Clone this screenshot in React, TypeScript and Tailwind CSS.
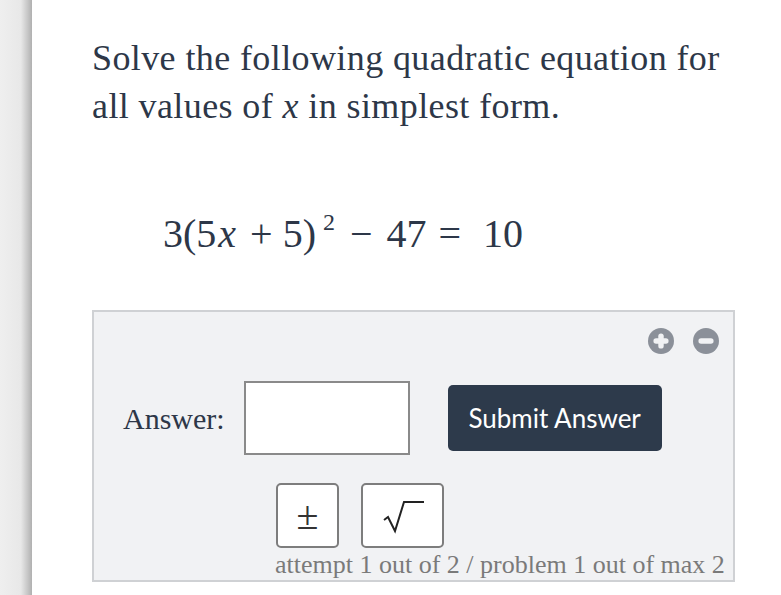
import React from "react";

const serif = { fontFamily: '"Liberation Serif", "DejaVu Serif", serif' };

const CircleIcon = ({ plus }: { plus?: boolean }) => (
  <svg width="26" height="26" viewBox="0 0 24 24">
    <circle cx="12" cy="12" r="12" fill="#8b9099" />
    <rect x="5" y="9.5" width="14" height="5" rx="2.5" fill="#f1f2f4" />
    {plus && <rect x="9.5" y="5" width="5" height="14" rx="2.5" fill="#f1f2f4" />}
  </svg>
);

const App = () => {
  return (
    <div className="flex w-[781px] h-[595px] bg-white overflow-hidden">
      <div className="w-[32px] shrink-0 h-full bg-[linear-gradient(to_right,#efefef_0%,#e8e8e8_65%,#c4c4c4_88%,#b0b0b0_100%)]" />
      <div className="flex-1 min-w-0 pl-[60px] pr-[46px]">
        <p className="mt-[35px] text-[36px] leading-[47.5px] tracking-[0.4px] text-[#2d3748] whitespace-nowrap" style={serif}>
          Solve the following quadratic equation for
          <br />
          all values of <i>x</i> in simplest form.
        </p>
        <div className="mt-[82px] ml-[71px] flex items-baseline h-[44px] text-[40px] leading-[44px] text-[#2d3748]" style={serif}>
          <span>3(5</span>
          <i className="ml-[2px]">x</i>
          <span className="ml-[14px]">+</span>
          <span className="ml-[10px]">5)</span>
          <span className="ml-[7px] text-[24px] relative -top-[17px]">2</span>
          <span className="ml-[15px]">−</span>
          <span className="ml-[14px]">47</span>
          <span className="ml-[12px]">=</span>
          <span className="ml-[22px]">10</span>
        </div>
        <div className="mt-[54px] h-[272px] border-2 border-[#cfd1d4] bg-[#f1f2f4] flex flex-col">
          <div className="flex justify-end gap-[19px] pt-[16px] pr-[14px]">
            <CircleIcon plus />
            <CircleIcon />
          </div>
          <div className="flex items-center mt-[27px] pl-[29px]">
            <span className="text-[30px] text-[#2d3748]" style={serif}>Answer:</span>
            <div className="ml-[19px] w-[166px] h-[74px] bg-white border-2 border-[#8a8a8a]" />
            <button
              className="ml-[38px] w-[214px] h-[66px] rounded-[5px] bg-[#2d3a4b] text-white text-[26px]"
              style={{ fontFamily: 'Lato, "Open Sans", sans-serif' }}
            >
              Submit Answer
            </button>
          </div>
          <div className="flex gap-[22px] mt-[28px] pl-[182px]">
            <div className="w-[63px] h-[65px] rounded-[5px] border-2 border-[#7d7d7d] bg-white flex items-center justify-center text-[40px] leading-none text-[#333]" style={serif}>
              ±
            </div>
            <div className="w-[83px] h-[65px] rounded-[5px] border-2 border-[#7d7d7d] bg-white flex items-center justify-center">
              <svg width="46" height="36" viewBox="0 0 46 36">
                <path d="M4 22 L8 19 L15 33 L24 4 L44 4" fill="none" stroke="#222" strokeWidth="2" />
              </svg>
            </div>
          </div>
          <div className="mt-[3px] pl-[181px] text-[26px] leading-[28px] text-[#7a7a7a] whitespace-nowrap" style={serif}>
            attempt 1 out of 2 / problem 1 out of max 2
          </div>
        </div>
      </div>
    </div>
  );
};

export default App;
